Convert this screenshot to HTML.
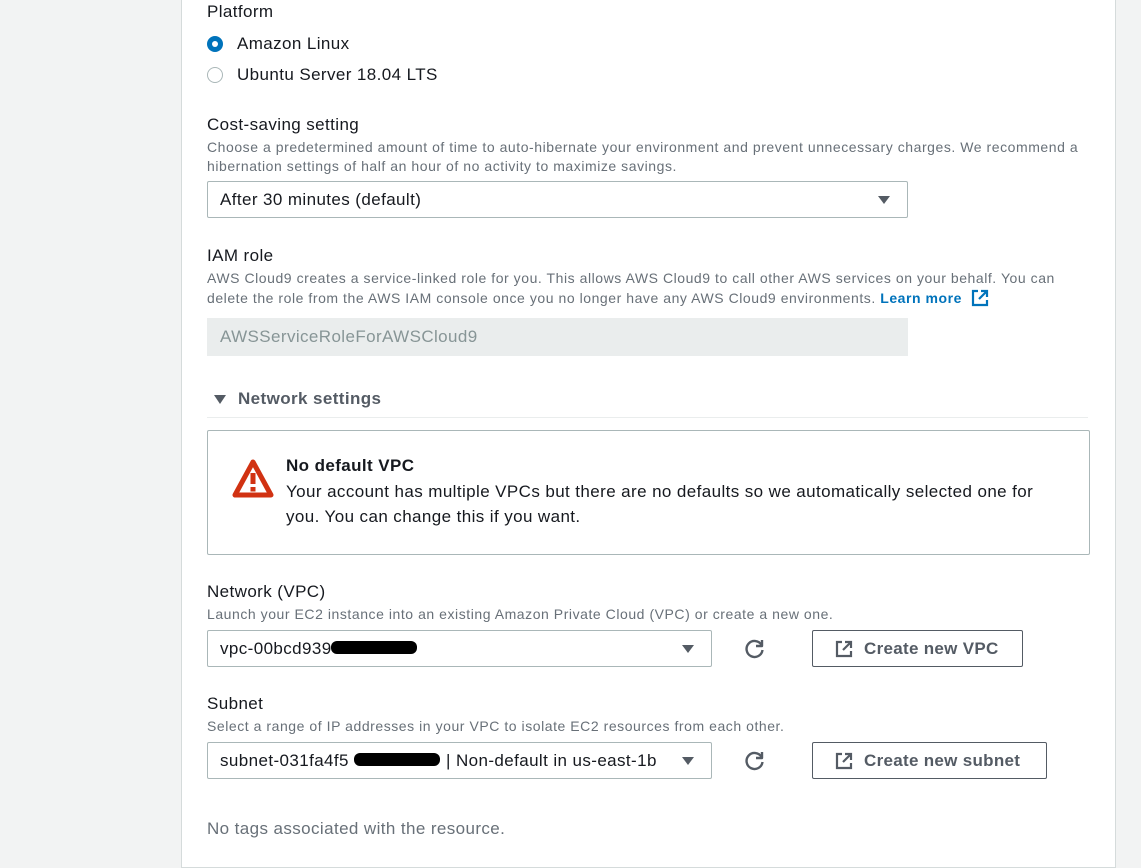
<!DOCTYPE html>
<html><head><style>
*{margin:0;padding:0;box-sizing:border-box}
body{width:1141px;height:851px;background:#f2f3f3;font-family:"Liberation Sans","DejaVu Sans",sans-serif;color:#16191f;position:relative;overflow:hidden}
.panel{position:absolute;left:181px;top:-2px;width:935px;height:870px;background:#fff;border:1px solid #d5dbdb}
.t{position:absolute;white-space:nowrap;font-size:17px;line-height:20px;letter-spacing:0.4px}
.d{position:absolute;white-space:nowrap;font-size:14px;line-height:20px;color:#687078;letter-spacing:0.55px}
.sel{position:absolute;height:37px;border:1px solid #aab7b8;border-radius:2px;background:#fff}
.sel .tx{position:absolute;left:12px;top:8px;font-size:17px;line-height:20px;white-space:nowrap;letter-spacing:0.4px}
.arr{position:absolute;right:17px;top:14px;width:0;height:0;border-left:6px solid transparent;border-right:6px solid transparent;border-top:8px solid #545b64}
.btn{position:absolute;height:37px;border:1px solid #545b64;border-radius:2px;background:#fff;font-weight:bold;font-size:17px;color:#545b64;letter-spacing:0.3px}
.btn span{position:absolute;left:51px;top:8px;line-height:20px;white-space:nowrap}
.btn svg{position:absolute;left:22px;top:9px}
.red{position:absolute;background:#000;border-radius:6px}
</style></head><body>
<div class="panel"></div>

<div class="t" style="left:207px;top:2px">Platform</div>
<div style="position:absolute;left:207px;top:36px;width:16px;height:16px;border-radius:50%;background:#0073bb"></div>
<div style="position:absolute;left:212px;top:41px;width:6px;height:6px;border-radius:50%;background:#fff"></div>
<div class="t" style="left:237px;top:34px">Amazon Linux</div>
<div style="position:absolute;left:207px;top:67px;width:16px;height:16px;border-radius:50%;border:1.5px solid #aab7b8"></div>
<div class="t" style="left:237px;top:65px">Ubuntu Server 18.04 LTS</div>

<div class="t" style="left:207px;top:115px">Cost-saving setting</div>
<div class="d" style="left:207px;top:137px">Choose a predetermined amount of time to auto-hibernate your environment and prevent unnecessary charges. We recommend a</div>
<div class="d" style="left:207px;top:156px">hibernation settings of half an hour of no activity to maximize savings.</div>
<div class="sel" style="left:207px;top:181px;width:701px"><div class="tx">After 30 minutes (default)</div><div class="arr"></div></div>

<div class="t" style="left:207px;top:246px">IAM role</div>
<div class="d" style="left:207px;top:268px">AWS Cloud9 creates a service-linked role for you. This allows AWS Cloud9 to call other AWS services on your behalf. You can</div>
<div class="d" style="left:207px;top:288px">delete the role from the AWS IAM console once you no longer have any AWS Cloud9 environments. <b style="color:#0073bb">Learn more</b></div>
<svg style="position:absolute;left:971px;top:289px" width="18" height="18" viewBox="0 0 18 18" fill="none" stroke="#0073bb" stroke-width="2.2"><path d="M7 2H2v14h14v-5"/><path d="M10 2h6v6M16 2l-8 8"/></svg>
<div style="position:absolute;left:207px;top:318px;width:701px;height:38px;background:#eaeded"></div>
<div class="t" style="left:220px;top:327px;color:#879596">AWSServiceRoleForAWSCloud9</div>

<div style="position:absolute;left:214px;top:395px;width:0;height:0;border-left:6px solid transparent;border-right:6px solid transparent;border-top:9px solid #545b64"></div>
<div class="t" style="left:238px;top:389px;font-weight:bold;color:#545b64">Network settings</div>
<div style="position:absolute;left:207px;top:417px;width:881px;height:1px;background:#eaeded"></div>

<div style="position:absolute;left:207px;top:430px;width:883px;height:125px;border:1px solid #aab7b8;border-radius:2px"></div>
<svg style="position:absolute;left:232px;top:459px" width="42" height="40" viewBox="0 0 42 40"><path d="M21 3L3 36h36z" fill="none" stroke="#d13212" stroke-width="5" stroke-linejoin="round"/><rect x="18.5" y="14" width="5" height="11" fill="#d13212"/><rect x="18.5" y="28" width="5" height="4.5" fill="#d13212"/></svg>
<div class="t" style="left:286px;top:456px;font-weight:bold">No default VPC</div>
<div class="t" style="left:286px;top:482px">Your account has multiple VPCs but there are no defaults so we automatically selected one for</div>
<div class="t" style="left:286px;top:507px">you. You can change this if you want.</div>

<div class="t" style="left:207px;top:582px">Network (VPC)</div>
<div class="d" style="left:207px;top:604px">Launch your EC2 instance into an existing Amazon Private Cloud (VPC) or create a new one.</div>
<div class="sel" style="left:207px;top:630px;width:505px"><div class="tx">vpc-00bcd939</div><div class="arr"></div></div>
<div class="red" style="left:331px;top:641px;width:86px;height:13px"></div>
<svg style="position:absolute;left:744px;top:637px" width="22" height="22" viewBox="0 0 22 22" fill="none" stroke="#545b64" stroke-width="2.4"><path d="M17.5 8A8 8 0 1 0 18.5 13"/><path d="M18 3v6h-6" stroke-linejoin="round"/></svg>
<div class="btn" style="left:812px;top:630px;width:211px"><svg width="18" height="18" viewBox="0 0 18 18" fill="none" stroke="#545b64" stroke-width="2.2"><path d="M7 2H2v14h14v-5"/><path d="M10 2h6v6M16 2l-8 8"/></svg><span>Create new VPC</span></div>

<div class="t" style="left:207px;top:694px">Subnet</div>
<div class="d" style="left:207px;top:716px">Select a range of IP addresses in your VPC to isolate EC2 resources from each other.</div>
<div class="sel" style="left:207px;top:742px;width:505px"><div class="tx">subnet-031fa4f5</div><div class="tx" style="left:238px">| Non-default in us-east-1b</div><div class="arr"></div></div>
<div class="red" style="left:354px;top:753px;width:86px;height:13px"></div>
<svg style="position:absolute;left:744px;top:749px" width="22" height="22" viewBox="0 0 22 22" fill="none" stroke="#545b64" stroke-width="2.4"><path d="M17.5 8A8 8 0 1 0 18.5 13"/><path d="M18 3v6h-6" stroke-linejoin="round"/></svg>
<div class="btn" style="left:812px;top:742px;width:235px"><svg width="18" height="18" viewBox="0 0 18 18" fill="none" stroke="#545b64" stroke-width="2.2"><path d="M7 2H2v14h14v-5"/><path d="M10 2h6v6M16 2l-8 8"/></svg><span>Create new subnet</span></div>

<div class="t" style="left:207px;top:819px;color:#687078">No tags associated with the resource.</div>
</body></html>
